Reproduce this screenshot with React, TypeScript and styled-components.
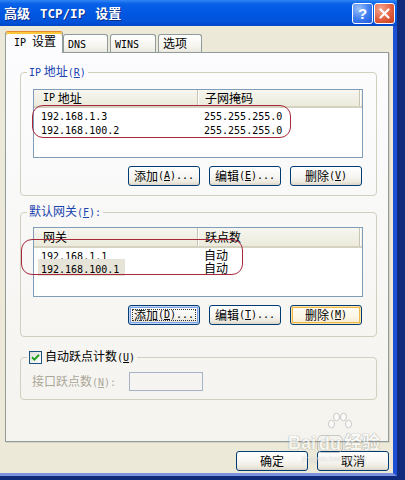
import styled, { createGlobalStyle, css } from "styled-components"

const GlobalStyle = createGlobalStyle`
  html, body {
    margin: 0;
    padding: 0;
  }
  body {
    width: 405px;
    height: 480px;
    overflow: hidden;
    background: #102a7c;
    font-family: "Noto Sans CJK SC", "Noto Sans", sans-serif;
    font-size: 12px;
    line-height: 14px;
    color: #000;
  }
`

const ipRows = [
    { ip: "192.168.1.3", mask: "255.255.255.0" },
    { ip: "192.168.100.2", mask: "255.255.255.0" },
]

const gatewayRows = [
    { ip: "192.168.1.1", metric: "自动", selected: false },
    { ip: "192.168.100.1", metric: "自动", selected: true },
]

export default function App() {
    return (
        <>
            <GlobalStyle />
            <Window>
                <TitleBar>
                    <Title>
                        <span>高级</span>
                        <Lat $size={12.5}>TCP/IP</Lat>
                        <span>设置</span>
                    </Title>
                    <CaptionButtons>
                        <CaptionButton>?</CaptionButton>
                        <CaptionButton $close>
                            <svg width="11" height="11" viewBox="0 0 11 11">
                                <path d="M1.5 1.5 L9.5 9.5 M9.5 1.5 L1.5 9.5" stroke="#fff" strokeWidth="2.2" strokeLinecap="round" />
                            </svg>
                        </CaptionButton>
                    </CaptionButtons>
                </TitleBar>
                <Body>
                    <TabStrip>
                        <Tab $active $w={58}><Lat>IP </Lat>设置</Tab>
                        <Tab $w={45}><Lat>DNS</Lat></Tab>
                        <Tab $w={46}><Lat>WINS</Lat></Tab>
                        <Tab $w={44}>选项</Tab>
                    </TabStrip>
                    <Panel>
                        <Group $pb={9}>
                            <Legend><Lat>IP</Lat> 地址<Lat>(<u>R</u>)</Lat></Legend>
                            <List $mt={9} $h={69}>
                                <HeaderRow $h={18}>
                                    <HeaderCell $w={164} $pl={9}><Lat>IP</Lat> 地址</HeaderCell>
                                    <HeaderCell $w={162} $pl={7}>子网掩码</HeaderCell>
                                </HeaderRow>
                                {ipRows.map((row, index) => (
                                    <Row key={index} $h={14}>
                                        <Cell $w={164} $pl={7}><Lat>{row.ip}</Lat></Cell>
                                        <Cell $w={162} $pl={6}><Lat>{row.mask}</Lat></Cell>
                                    </Row>
                                ))}
                            </List>
                            <ButtonRow>
                                <Button>添加<Lat>(<u>A</u>)...</Lat></Button>
                                <Button>编辑<Lat>(<u>E</u>)...</Lat></Button>
                                <Button>删除<Lat>(<u>V</u>)</Lat></Button>
                            </ButtonRow>
                        </Group>

                        <Group $pb={11} $mt={8}>
                            <Legend>默认网关<Lat>(<u>F</u>):</Lat></Legend>
                            <List $mt={7} $h={70}>
                                <HeaderRow $h={20}>
                                    <HeaderCell $w={164} $pl={9}>网关</HeaderCell>
                                    <HeaderCell $w={162} $pl={7}>跃点数</HeaderCell>
                                </HeaderRow>
                                {gatewayRows.map((row, index) => (
                                    <Row key={index} $h={13}>
                                        <Cell $w={164} $pl={7}>
                                            <Selectable $selected={row.selected}><Lat>{row.ip}</Lat></Selectable>
                                        </Cell>
                                        <Cell $w={162} $pl={6}>{row.metric}</Cell>
                                    </Row>
                                ))}
                            </List>
                            <ButtonRow>
                                <Button $variant="focus">添加<Lat>(<u>D</u>)...</Lat></Button>
                                <Button>编辑<Lat>(<u>T</u>)...</Lat></Button>
                                <Button $variant="default">删除<Lat>(<u>M</u>)</Lat></Button>
                            </ButtonRow>
                        </Group>

                        <Group $pb={8} $mt={12}>
                            <Legend $plain>
                                <CheckLabel>
                                    <Checkbox>
                                        <svg width="9" height="9" viewBox="0 0 9 9">
                                            <path d="M1 4.2 L3.4 6.6 L8 1.8" fill="none" stroke="#21a121" strokeWidth="2" />
                                        </svg>
                                    </Checkbox>
                                    <span>自动跃点计数<Lat>(<u>U</u>)</Lat></span>
                                </CheckLabel>
                            </Legend>
                            <FieldRow>
                                <DisabledLabel>接口跃点数<Lat>(<u>N</u>):</Lat></DisabledLabel>
                                <DisabledInput />
                            </FieldRow>
                        </Group>
                    </Panel>
                    <Footer>
                        <Button>确定</Button>
                        <Button>取消</Button>
                    </Footer>
                </Body>

                <Mark style={{ left: 32, top: 105, width: 259, height: 33 }} />
                <Mark style={{ left: 21, top: 239, width: 222, height: 36 }} />

                <Watermark>
                    <Paw width="26" height="22" viewBox="0 0 26 22">
                        <ellipse cx="4.5" cy="12" rx="3" ry="3.8" />
                        <ellipse cx="9.5" cy="5" rx="3" ry="3.8" />
                        <ellipse cx="16.5" cy="5" rx="3" ry="3.8" />
                        <ellipse cx="21.5" cy="12" rx="3" ry="3.8" />
                    </Paw>
                    <WatermarkText>Bai<DuBox>du</DuBox>经验</WatermarkText>
                    <WatermarkUrl>jingyan.baidu.com</WatermarkUrl>
                </Watermark>
            </Window>
        </>
    )
}

const Lat = styled.span<{ $size?: number }>`
    font-family: "DejaVu Sans Mono", "Liberation Mono", monospace;
    font-size: ${p => p.$size ?? 10}px;
`

const Window = styled.div`
    position: relative;
    width: 397px;
    height: 476px;
    display: flex;
    flex-direction: column;
`

const TitleBar = styled.div`
    height: 26px;
    flex: none;
    display: flex;
    align-items: center;
    justify-content: space-between;
    padding: 0 2px 0 4px;
    background: linear-gradient(#2f86f6 0%, #0a62e8 14%, #0057e2 50%, #0152d9 85%, #0146c8 100%);
    color: #fff;
`

const Title = styled.div`
    display: flex;
    align-items: baseline;
    gap: 10px;
    font-size: 13px;
    font-weight: bold;
    text-shadow: 1px 1px 0 #0a2d8c;
`

const CaptionButtons = styled.div`
    display: flex;
    gap: 1px;
`

const CaptionButton = styled.div<{ $close?: boolean }>`
    width: 21px;
    height: 21px;
    box-sizing: border-box;
    border: 1px solid #fff;
    border-radius: 3px;
    display: flex;
    align-items: center;
    justify-content: center;
    color: #fff;
    font: bold 15px "Liberation Sans", sans-serif;
    background: ${p => p.$close
        ? "radial-gradient(circle at 30% 25%, #f4a58e, #e2603f 55%, #c23c1c)"
        : "radial-gradient(circle at 30% 25%, #9cc0fa, #3d7cf0 55%, #1f56d8)"};
`

const Body = styled.div`
    flex: 1;
    display: flex;
    flex-direction: column;
    background: #ece9d8;
    border-right: 4px solid #1d50d4;
    border-bottom: 3px solid #7b93de;
    padding: 5px 4px 0 5px;
`

const TabStrip = styled.div`
    height: 21px;
    display: flex;
    align-items: flex-end;
    position: relative;
    z-index: 1;
`

const Tab = styled.div<{ $active?: boolean; $w: number }>`
    box-sizing: border-box;
    width: ${p => p.$w}px;
    height: 18px;
    margin-right: 2px;
    padding: 1px 0 0 4px;
    border: 1px solid #919b9c;
    border-bottom: none;
    border-radius: 3px 3px 0 0;
    background: linear-gradient(#ffffff, #f6f5f0 65%, #e9e7dd);
    line-height: 14px;
    white-space: nowrap;

    ${p => p.$active && css`
        height: 22px;
        margin-right: 0;
        margin-bottom: -1px;
        padding: 2px 0 0 8px;
        border-top: 1px solid #e68b2c;
        box-shadow: inset 0 2px 0 #ffc73c;
        background: #fcfcfe;
    `}
`

const Panel = styled.div`
    height: 390px;
    box-sizing: border-box;
    border: 1px solid #919b9c;
    box-shadow: 1px 1px 0 #d6d3c4;
    background: linear-gradient(#fcfcfe, #f4f3ee);
    padding: 11px 11px 0 14px;
    display: flex;
    flex-direction: column;
`

const Group = styled.fieldset<{ $pb: number; $mt?: number }>`
    margin: ${p => p.$mt ?? 0}px 0 0 0;
    padding: 0 0 ${p => p.$pb}px 0;
    border: 1px solid #d0d0bf;
    border-radius: 4px;
    min-width: 0;
`

const Legend = styled.legend<{ $plain?: boolean }>`
    margin-left: 6px;
    padding: 0 2px;
    line-height: 14px;
    color: ${p => p.$plain ? "#000" : "#1a44b0"};
`

const CheckLabel = styled.span`
    display: inline-flex;
    align-items: center;
    gap: 3px;
`

const Checkbox = styled.span`
    width: 13px;
    height: 13px;
    box-sizing: border-box;
    border: 1px solid #1c5180;
    background: linear-gradient(135deg, #dcdcd7, #ffffff);
    display: inline-flex;
    align-items: center;
    justify-content: center;
`

const List = styled.div<{ $mt: number; $h: number }>`
    margin: ${p => p.$mt}px 13px 0 12px;
    height: ${p => p.$h}px;
    box-sizing: border-box;
    border: 1px solid #7f9db9;
    background: #fff;
`

const HeaderRow = styled.div<{ $h: number }>`
    display: flex;
    height: ${p => p.$h}px;
    box-sizing: border-box;
    background: linear-gradient(#f7f6f0, #ebeadb);
    border-bottom: 2px solid #d6d2c2;
`

const HeaderCell = styled.div<{ $w: number; $pl: number }>`
    width: ${p => p.$w}px;
    box-sizing: border-box;
    padding-left: ${p => p.$pl}px;
    border-right: 1px solid #c7c5b2;
    box-shadow: 1px 0 0 #fff;
    display: flex;
    align-items: center;
    white-space: pre;
`

const Row = styled.div<{ $h: number }>`
    display: flex;
    height: ${p => p.$h}px;
    line-height: ${p => p.$h}px;
`

const Cell = styled.div<{ $w: number; $pl: number }>`
    width: ${p => p.$w}px;
    box-sizing: border-box;
    padding-left: ${p => p.$pl}px;
    white-space: nowrap;
`

const Selectable = styled.span<{ $selected?: boolean }>`
    ${p => p.$selected && css`
        background: #e6e3d8;
        padding: 0 6px 0 3px;
        margin-left: -3px;
    `}
`

const ButtonRow = styled.div`
    display: flex;
    justify-content: flex-end;
    gap: 9px;
    margin: 8px 14px 0 0;
`

const Footer = styled.div`
    display: flex;
    justify-content: flex-end;
    gap: 9px;
    margin-top: 9px;
`

const Button = styled.button<{ $variant?: "focus" | "default" }>`
    position: relative;
    width: 72px;
    height: 20px;
    box-sizing: border-box;
    padding: 0;
    border: 1px solid #003c74;
    border-radius: 3px;
    background: linear-gradient(#ffffff, #f6f5f1 55%, #ebe8dd 85%, #d9d4c6);
    font-family: inherit;
    font-size: 12px;
    line-height: 14px;
    color: #000;
    display: flex;
    align-items: center;
    justify-content: center;
    white-space: nowrap;

    ${p => p.$variant === "focus" && css`
        box-shadow: inset 0 0 0 1px #c2d5f6, inset 0 0 0 2px #7ca2e8;
        &::after {
            content: "";
            position: absolute;
            inset: 3px;
            border: 1px dotted #333;
        }
    `}

    ${p => p.$variant === "default" && css`
        background: linear-gradient(#fffdf6, #fbf6e6 60%, #f3ead2);
        box-shadow: inset 0 0 0 1px #fde6a8, inset 0 0 0 2px #f0b64a;
    `}
`

const FieldRow = styled.div`
    display: flex;
    align-items: center;
    margin: 7px 0 0 11px;
`

const DisabledLabel = styled.span`
    width: 97px;
    color: #aca899;
    white-space: nowrap;
`

const DisabledInput = styled.div`
    width: 74px;
    height: 19px;
    box-sizing: border-box;
    border: 1px solid #a5b3c8;
`

const Mark = styled.div`
    position: absolute;
    box-sizing: border-box;
    border: 1.5px solid #a8283a;
    border-radius: 11px;
    pointer-events: none;
`

const Watermark = styled.div`
    position: absolute;
    left: 286px;
    top: 412px;
    width: 96px;
    display: grid;
    grid-template-rows: 22px 19px 11px;
    justify-items: center;
    pointer-events: none;
    opacity: 0.6;
`

const Paw = styled.svg`
    display: block;
    margin-left: 12px;
    fill: #fff;
    stroke: #9a9a9a;
    stroke-width: 0.8;
`

const WatermarkText = styled.div`
    height: 19px;
    display: flex;
    align-items: center;
    font-family: "Liberation Sans", "Noto Sans CJK SC", sans-serif;
    font-size: 18px;
    font-weight: bold;
    line-height: 19px;
    color: #fff;
    text-shadow: 0 0 1px #777, 0 0 1px #777;
`

const DuBox = styled.span`
    margin: 0 1px;
    padding: 0 1px;
    line-height: 16px;
    border: 1px solid #aaa;
    border-radius: 5px;
`

const WatermarkUrl = styled.div`
    height: 11px;
    font-family: "Liberation Sans", sans-serif;
    font-size: 8px;
    line-height: 11px;
    color: #fff;
    text-shadow: 0 0 1px #888;
`
